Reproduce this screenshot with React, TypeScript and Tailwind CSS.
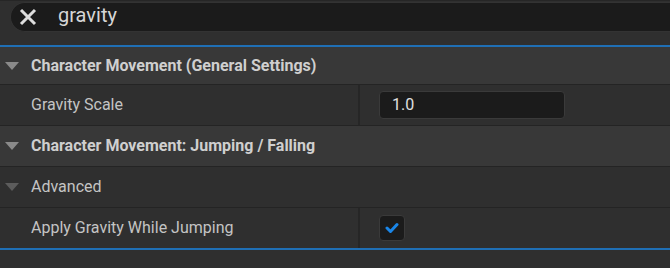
import React from "react";

function Tri({ dim }: { dim?: boolean }) {
  return (
    <svg width="14" height="8" viewBox="0 0 14 8" className="shrink-0">
      <path d="M0 0 L14 0 L7 8 Z" fill={dim ? "#5c5c5c" : "#8a8a8a"} />
    </svg>
  );
}

export default function App() {
  return (
    <div
      className="w-[670px] h-[268px] bg-[#2f2f2f] overflow-hidden text-[#c4c4c4]"
      style={{ fontFamily: "Roboto, 'Noto Sans', sans-serif" }}
    >
      <div className="h-[45px] bg-[#2f2f2f] pl-[10px] pt-[1px] border-t border-[#262626]">
        <div className="h-[30px] bg-[#1b1b1b] border border-[#333333] border-r-0 rounded-l-[15px] flex items-center">
          <svg width="20" height="20" viewBox="0 0 20 20" className="ml-[7px]">
            <path d="M3 3 L17 17 M17 3 L3 17" stroke="#dedede" strokeWidth="3" strokeLinecap="butt" />
          </svg>
          <span className="ml-[20px] text-[20px] text-[#d6d6d6] leading-none pb-[4px]">gravity</span>
        </div>
      </div>
      <div className="h-[2px] bg-[#1f6fb5]" />
      <div className="h-[38px] bg-[#383838] flex items-center pl-[5px] border-b border-[#242424]">
        <Tri />
        <span className="ml-[12px] text-[16px] font-bold text-[#cfcfcf]">Character Movement (General Settings)</span>
      </div>
      <div className="h-[41px] flex border-b border-[#242424]">
        <div className="w-[360px] flex items-center pl-[31px] text-[16px] text-[#c4c4c4] border-r-2 border-[#262626]">
          Gravity Scale
        </div>
        <div className="flex-1 flex items-center pl-[19px]">
          <div className="w-[186px] h-[28px] bg-[#1b1b1b] border border-[#3a3a3a] rounded-[4px] flex items-center pl-[12px] text-[16px] text-[#e0e0e0]">
            1.0
          </div>
        </div>
      </div>
      <div className="h-[41px] bg-[#383838] flex items-center pl-[5px] border-b border-[#242424]">
        <Tri />
        <span className="ml-[12px] text-[16px] font-bold text-[#cfcfcf]">Character Movement: Jumping / Falling</span>
      </div>
      <div className="h-[41px] flex items-center pl-[5px] border-b border-[#242424]">
        <Tri dim />
        <span className="ml-[12px] text-[16px] text-[#c4c4c4]">Advanced</span>
      </div>
      <div className="h-[40px] flex">
        <div className="w-[360px] flex items-center pl-[31px] text-[16px] text-[#c4c4c4] border-r-2 border-[#262626]">
          Apply Gravity While Jumping
        </div>
        <div className="flex-1 flex items-center pl-[19px]">
          <div className="w-[26px] h-[26px] bg-[#1b1b1b] border border-[#3a3a3a] rounded-[4px] flex items-center justify-center">
            <svg width="14" height="12" viewBox="0 0 14 12">
              <path d="M2 6 L5.5 9.5 L12 2.5" stroke="#1a86e8" strokeWidth="3" fill="none" strokeLinecap="round" strokeLinejoin="round" />
            </svg>
          </div>
        </div>
      </div>
      <div className="h-[2px] bg-[#1f6fb5]" />
    </div>
  );
}
